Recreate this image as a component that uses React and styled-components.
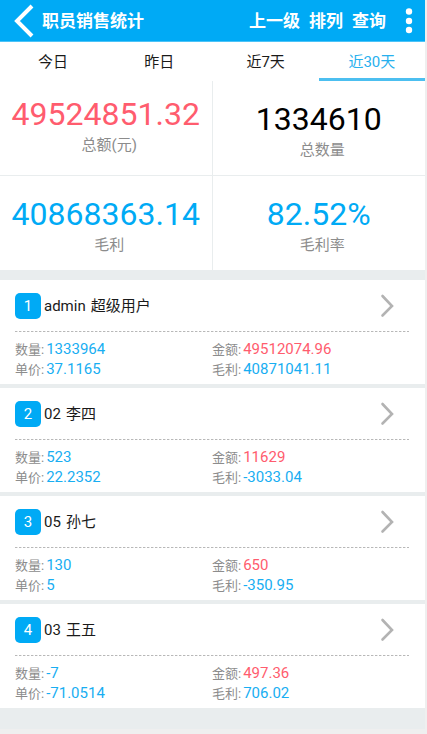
import React from "react";
import styled, { createGlobalStyle } from "styled-components";

const BLUE = "#00aaf5";
const RED = "#ff5c6e";

const GlobalStyle = createGlobalStyle`
  *, *::before, *::after { box-sizing: border-box; }
  html { height: 100%; }
  body {
    margin: 0;
    background: #efefef;
    color: #1a1a1a;
    font-family: Roboto, "Noto Sans CJK SC", sans-serif;
    font-size: 15px;
  }
  button { border: 0; padding: 0; background: none; color: inherit; font: inherit; cursor: pointer; }
`;

const Screen = styled.div`
  margin-right: 2px;
  padding-bottom: 21px;
  background: #e9edee;
`;

const TopBar = styled.header`
  display: flex;
  align-items: center;
  height: 42px;
  padding: 0 10px 0 12px;
  background: ${BLUE};
  border-bottom: 1px solid #4cc3f7;
  color: #fff;
  font-size: 17px;
  font-weight: 700;
`;

const BackButton = styled.button`
  display: flex;
  width: 30px;
  height: 40px;
  align-items: center;
`;

const Title = styled.h1`
  flex: 1;
  margin: 0;
  font-size: 17px;
  line-height: 24px;
  white-space: nowrap;
`;

const Actions = styled.nav`
  display: flex;
  gap: 9px;
  line-height: 24px;
`;

const MoreButton = styled.button`
  display: flex;
  justify-content: flex-end;
  width: 29px;
  height: 40px;
  align-items: center;
`;

const Tabs = styled.div`
  display: grid;
  grid-template-columns: repeat(4, 1fr);
  background: #fff;
`;

const Tab = styled.button`
  && {
    height: 39px;
    padding-top: 4px;
    border-bottom: 3px solid ${(p) => (p.$active ? "#4cbff0" : "transparent")};
    color: ${(p) => (p.$active ? "#27b0ee" : "#1a1a1a")};
    line-height: 20px;
  }
`;

const Summary = styled.section`
  display: grid;
  grid-template-columns: 1fr 1fr;
  background: #fff;
`;

const Metric = styled.div`
  display: flex;
  flex-direction: column;
  align-items: center;
  height: ${(p) => (p.$top ? 95 : 94)}px;
  padding-top: ${(p) => (p.$low ? 20 : p.$top ? 15 : 20)}px;
  border-right: ${(p) => (p.$left ? "1px solid #e9edee" : "0")};
  border-bottom: ${(p) => (p.$top ? "1px solid #e9edee" : "0")};
`;

const MetricValue = styled.strong`
  color: ${(p) => p.$color};
  font-size: 32px;
  font-weight: 400;
  line-height: 36px;
`;

const MetricLabel = styled.span`
  padding-left: 7px;
  color: #8c8c8c;
  font-size: 15px;
  line-height: 26px;
`;

const List = styled.main`
  display: grid;
  gap: 4px;
  padding-top: 10px;
`;

const Card = styled.article`
  height: 104px;
  padding: 0 16px 0 15px;
  background: #fff;
`;

const CardHead = styled.button`
  display: flex;
  align-items: center;
  width: 100%;
  height: 51px;
  text-align: left;
`;

const Rank = styled.span`
  width: 26px;
  height: 26px;
  margin-right: 3px;
  border-radius: 5px;
  background: ${BLUE};
  color: #fff;
  font-size: 15px;
  line-height: 26px;
  text-align: center;
`;

const Name = styled.span`
  display: flex;
  flex: 1;
  gap: 5px;
  line-height: 20px;
`;

const Arrow = styled.svg`
  width: 14px;
  height: 24px;
  margin-right: 15px;
`;

const DashLine = styled.svg`
  display: block;
  width: 100%;
  height: 1px;
`;

const Facts = styled.dl`
  display: grid;
  grid-template-columns: 1fr 1fr;
  margin: 0;
  padding-top: 7px;
`;

const Fact = styled.div`
  display: flex;
  align-items: baseline;
  gap: 2px;
  height: 20px;
  line-height: 20px;
`;

const FactLabel = styled.dt`
  color: #8c8c8c;
  font-size: 13px;
`;

const FactValue = styled.dd`
  margin: 0;
  color: ${(p) => (p.$red ? RED : "#18aef2")};
  font-size: 15px;
`;

const metrics = [
  { value: "49524851.32", label: "总额(元)", color: RED },
  { value: "1334610", label: "总数量", color: "#000", low: true },
  { value: "40868363.14", label: "毛利", color: BLUE },
  { value: "82.52%", label: "毛利率", color: BLUE },
];

const staff = [
  { code: "admin", name: "超级用户", count: "1333964", amount: "49512074.96", price: "37.1165", profit: "40871041.11" },
  { code: "02", name: "李四", count: "523", amount: "11629", price: "22.2352", profit: "-3033.04" },
  { code: "05", name: "孙七", count: "130", amount: "650", price: "5", profit: "-350.95" },
  { code: "03", name: "王五", count: "-7", amount: "497.36", price: "-71.0514", profit: "706.02" },
];

export default function App() {
  const [active, setActive] = React.useState(3);
  return (
    <>
      <GlobalStyle />
      <Screen>
        <TopBar>
          <BackButton aria-label="返回">
            <svg width="24" height="34" viewBox="0 0 24 34" fill="none" stroke="#fff" strokeWidth="4">
              <path d="M20 2 5 17 20 32" />
            </svg>
          </BackButton>
          <Title>职员销售统计</Title>
          <Actions>
            <button>上一级</button>
            <button>排列</button>
            <button>查询</button>
          </Actions>
          <MoreButton aria-label="更多">
            <svg width="12" height="26" viewBox="0 0 12 26" fill="#fff">
              <circle cx="6" cy="3.5" r="3.2" />
              <circle cx="6" cy="13" r="3.2" />
              <circle cx="6" cy="22" r="3.2" />
            </svg>
          </MoreButton>
        </TopBar>
        <Tabs role="tablist">
          {["今日", "昨日", "近7天", "近30天"].map((t, i) => (
            <Tab key={t} role="tab" aria-selected={i === active} $active={i === active} onClick={() => setActive(i)}>
              {t}
            </Tab>
          ))}
        </Tabs>
        <Summary>
          {metrics.map((m, i) => (
            <Metric key={m.label} $left={i % 2 === 0} $top={i < 2} $low={m.low}>
              <MetricValue $color={m.color}>{m.value}</MetricValue>
              <MetricLabel>{m.label}</MetricLabel>
            </Metric>
          ))}
        </Summary>
        <List>
          {staff.map((s, i) => (
            <Card key={s.code}>
              <CardHead>
                <Rank>{i + 1}</Rank>
                <Name>
                  <span>{s.code}</span>
                  <span>{s.name}</span>
                </Name>
                <Arrow viewBox="0 0 14 24" fill="none" stroke="#b3b3b3" strokeWidth="2.6" aria-hidden="true">
                  <path d="M2.5 2 12 12 2.5 21.5" strokeLinecap="round" />
                </Arrow>
              </CardHead>
              <DashLine aria-hidden="true">
                <line x1="0" y1="0.5" x2="100%" y2="0.5" stroke="#b8b8b8" strokeDasharray="2.4 1.6" />
              </DashLine>
              <Facts>
                <Fact><FactLabel>数量:</FactLabel><FactValue>{s.count}</FactValue></Fact>
                <Fact><FactLabel>金额:</FactLabel><FactValue $red>{s.amount}</FactValue></Fact>
                <Fact><FactLabel>单价:</FactLabel><FactValue>{s.price}</FactValue></Fact>
                <Fact><FactLabel>毛利:</FactLabel><FactValue>{s.profit}</FactValue></Fact>
              </Facts>
            </Card>
          ))}
        </List>
      </Screen>
    </>
  );
}
